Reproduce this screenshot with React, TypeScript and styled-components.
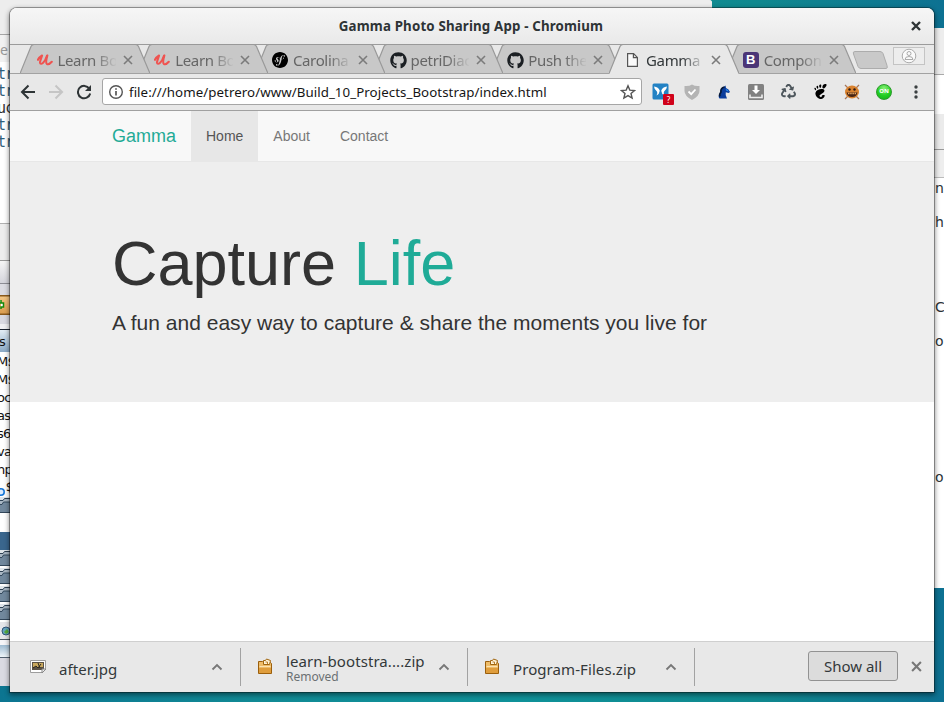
import React from 'react';
import styled, { createGlobalStyle } from 'styled-components';
import { FaGithub, FaRecycle } from 'react-icons/fa';
import { SiSymfony, SiGnome } from 'react-icons/si';

const Global = createGlobalStyle`
  * { box-sizing: border-box; }
  body { margin: 0; overflow: hidden; font-family: "Noto Sans", "Open Sans", sans-serif; }
`;

const Desktop = styled.div`
  position: relative;
  width: 944px;
  height: 702px;
  overflow: hidden;
  background:
    linear-gradient(90deg, #0c7591 0%, #118a95 27%, #0f9299 55%, #10898f 80%, #0d7192 100%);
`;

/* ---------- windows behind the browser ---------- */
const BackLeft = styled.div`
  position: absolute;
  left: 0;
  top: 0;
  width: 712px;
  height: 686px;
  overflow: hidden;
  border-top-right-radius: 3px;
  background: linear-gradient(#ededed, #ededed) 0 0 / 100% 10px no-repeat, #fff;
`;
const BackRight = styled.div`
  position: absolute;
  left: 700px;
  top: 28px;
  width: 244px;
  height: 560px;
  background: #fff;
`;
const Band = styled.div<{ $h: number; $bg: string }>`
  height: ${p => p.$h}px;
  background: ${p => p.$bg};
  overflow: hidden;
`;
const TabTitle = styled.div`
  padding-top: 6px;
  font: 14px/17px "Noto Sans", sans-serif;
  color: #999;
`;
const CodeLine = styled.div<{ $c?: string }>`
  height: 17px;
  margin-left: -3px;
  font: 15px/17px "DejaVu Sans Mono", monospace;
  letter-spacing: -0.8px;
  color: ${p => p.$c || '#315f7b'};
`;
const ListLine = styled.div`
  position: relative;
  height: 18px;
  margin-left: -3px;
  padding-top: 1px;
  font: 13px/18px "DejaVu Sans", sans-serif;
  letter-spacing: -0.8px;
  color: #111;
`;
const ListHead = styled(ListLine)`
  margin-left: -1px;
  padding-top: 3px;
`;
const SideText = styled.div<{ $h: number }>`
  height: ${p => p.$h}px;
  padding-left: 235px;
  font: 14px/20px "DejaVu Sans", sans-serif;
  color: #2c3438;
`;
const FolderRow = styled.div`
  height: 18px;
  svg { display: block; }
`;

const Folder = () => (
  <FolderRow>
    <svg width="12" height="18">
      <rect width="12" height="16" fill="#dfe5ea" />
      <path d="M-1 15.500V4.500l1-1h3l1.500-2h8v14z" fill="#a9b7c4" stroke="#2f4254" />
      <path d="M-1 15.500V7.500h3l1.500-2.500h9v10.500z" fill="#71889d" stroke="#33485c" />
    </svg>
  </FolderRow>
);

/* ---------- browser window ---------- */
const BrowserWindow = styled.div`
  position: absolute;
  left: 10px;
  top: 8px;
  width: 924px;
  height: 684px;
  display: flex;
  flex-direction: column;
  overflow: hidden;
  border-radius: 7px 7px 0 0;
  background: #fff;
`;
const WindowShadow = styled.div`
  position: absolute;
  left: 10px;
  top: 8px;
  width: 924px;
  height: 684px;
  border-radius: 7px 7px 0 0;
  box-shadow: 0 0 0 1px rgba(0, 0, 0, 0.32), 0 2px 5px 1px rgba(0, 0, 0, 0.45);
`;
const TitleBar = styled.div`
  flex: none;
  height: 36px;
  display: grid;
  grid-template-columns: 36px 1fr 36px;
  align-items: center;
  background: linear-gradient(#f6f6f6, #e9e9e9);
  svg { display: block; margin-left: 13px; }
`;
const Title = styled.div`
  grid-column: 2;
  text-align: center;
  font-size: 13.3px;
  letter-spacing: 0.16px;
  font-weight: 700;
  color: #2e3436;
  white-space: nowrap;
  padding-right: 2px;
`;
const TabStrip = styled.div`
  flex: none;
  height: 30px;
  display: flex;
  padding-left: 10px;
  background: linear-gradient(#9b9b9b, #9b9b9b) 0 0 / 100% 1px no-repeat,
    linear-gradient(#a2a2a2, #a2a2a2) 0 29px / 100% 1px no-repeat, #e8e8e8;
`;
const TabBox = styled.div<{ $z: number }>`
  position: relative;
  z-index: ${p => p.$z};
  flex: none;
  width: 130px;
  height: 30px;
  margin-right: -12.3px;
  display: flex;
  align-items: center;
  padding: 1px 0 0 16.500px;
`;
const TabShape = styled.svg`
  position: absolute;
  left: 0;
  top: 0;
  z-index: -1;
`;
const TabIcon = styled.div`
  width: 16px;
  height: 16px;
  margin-right: 5px;
  svg { display: block; }
`;
const TabLabel = styled.div<{ $active?: boolean }>`
  width: 58px;
  overflow: hidden;
  white-space: nowrap;
  font-size: 15px;
  line-height: 20px;
  letter-spacing: -0.35px;
  color: ${p => (p.$active ? '#33383a' : '#666')};
  mask-image: linear-gradient(90deg, #000 62%, transparent 102%);
`;
const TabClose = styled.div`
  margin: 1px 0 0 7px;
  svg { display: block; }
`;
const NewTab = styled.svg`
  flex: none;
  margin: 7px 0 0 8px;
`;
const Profile = styled.div`
  margin: 3px 9px 0 auto;
  width: 32px;
  height: 18px;
  display: flex;
  align-items: center;
  justify-content: center;
  border: 1px solid #c4c4c4;
  background: #ededed;
`;

const Toolbar = styled.div`
  flex: none;
  height: 37px;
  display: flex;
  align-items: center;
  padding: 0 0 1px 10px;
  background: #e8e8e8;
  border-bottom: 1px solid #a0a0a0;
`;
const NavIcon = styled.div`
  width: 28px;
  svg { display: block; }
`;
const Omnibox = styled.div`
  width: 540px;
  height: 27px;
  margin-left: -2px;
  display: flex;
  align-items: center;
  padding: 0 5px;
  border: 1px solid #a6a6a6;
  border-radius: 3px;
  background: #fff;
`;
const Url = styled.div`
  flex: 1;
  padding-left: 5px;
  font-size: 13.3px;
  letter-spacing: 0.06px;
  line-height: 18px;
  color: #151515;
  white-space: nowrap;
`;
const Extensions = styled.div`
  flex: 1;
  display: grid;
  grid-template-columns: repeat(9, 32px);
  justify-items: center;
  align-items: center;
  padding-left: 2px;
`;
const Ext = styled.div`
  position: relative;
  width: 18px;
  height: 18px;
  display: flex;
  align-items: center;
  justify-content: center;
  color: #4d565c;
`;
const Badge = styled.div`
  position: absolute;
  left: 12px;
  top: 11px;
  width: 11px;
  height: 11px;
  border-radius: 1px;
  background: #d0021b;
  color: #fff;
  font-size: 8px;
  line-height: 11px;
  text-align: center;
`;
const OnDot = styled.div`
  width: 16px;
  height: 16px;
  border: 1px solid #2c9a2c;
  border-radius: 50%;
  background: radial-gradient(circle at 50% 25%, #8df07a, #22cf22 55%, #0fae17);
  color: #fff;
  font-size: 6px;
  font-weight: 700;
  line-height: 13px;
  text-align: center;
`;
const BootB = styled.div`
  width: 16px;
  height: 16px;
  border-radius: 3px;
  background: #4b3577;
  color: #fff;
  font: 700 13px/16px "Liberation Sans", sans-serif;
  text-align: center;
`;

/* ---------- page ---------- */
const Page = styled.main`
  flex: 1;
  font-family: "Liberation Sans", Arial, sans-serif;
  background: #fff;
`;
const SiteNav = styled.nav`
  height: 51px;
  display: flex;
  padding-left: 102px;
  background: #f8f8f8;
  border-bottom: 1px solid #e7e7e7;
`;
const Brand = styled.div`
  width: 79px;
  font-size: 18px;
  line-height: 50px;
  color: #1fab97;
`;
const NavLink = styled.div<{ $active?: boolean }>`
  height: 50px;
  padding: 0 15px;
  font-size: 14px;
  line-height: 50px;
  color: ${p => (p.$active ? '#555' : '#777')};
  background: ${p => (p.$active ? '#e7e7e7' : 'transparent')};
`;
const Jumbotron = styled.section`
  height: 240px;
  padding: 67px 0 0 102px;
  background: #eee;
  color: #333;
`;
const Headline = styled.h1`
  margin: 0;
  font-size: 63px;
  line-height: 69px;
  font-weight: 400;
  span { color: #1fab97; }
`;
const Lead = styled.p`
  margin: 10px 0 0;
  font-size: 21px;
  line-height: 30px;
  letter-spacing: 0.015px;
`;

/* ---------- downloads ---------- */
const DownloadBar = styled.footer`
  flex: none;
  height: 51px;
  display: flex;
  align-items: center;
  border-top: 1px solid #cfcfcf;
  background: #e8e8e8;
`;
const Download = styled.div<{ $w: number }>`
  width: ${p => p.$w}px;
  height: 38px;
  display: flex;
  align-items: center;
  padding-right: 17px;
  border-right: 1px solid #a2a2a2;
`;
const FileIcon = styled.div<{ $left: number }>`
  margin: 0 13px 2px ${p => p.$left}px;
  svg { display: block; }
`;
const FileText = styled.div<{ $shift: number }>`
  flex: 1;
  padding-top: ${p => p.$shift}px;
  white-space: nowrap;
`;
const FileName = styled.div`
  font-size: 15px;
  letter-spacing: 0.08px;
  line-height: 18px;
  color: #33383a;
`;
const FileState = styled.div`
  font-size: 12px;
  line-height: 13px;
  color: #6b7073;
`;
const ShowAll = styled.button`
  width: 90px;
  height: 30px;
  margin: 0 0 2px auto;
  padding: 0;
  border: 1px solid #929292;
  border-radius: 3px;
  background: #dcdcdc;
  font: 15px/20px "Noto Sans", sans-serif;
  color: #33383a;
`;
const BarClose = styled.div`
  margin: 0 12px 2px 13px;
  svg { display: block; }
`;

const Cross = ({ size, color, width }: { size: number; color: string; width: number }) => (
  <svg width={size} height={size} viewBox="0 0 10 10">
    <path d="M1 1l8 8M9 1l-8 8" stroke={color} strokeWidth={width} />
  </svg>
);
const Udemy = () => (
  <svg width="16" height="16" viewBox="0 0 17 16" fill="none" stroke="#ef5350" strokeLinecap="round" strokeLinejoin="round">
    <path d="M1 7.800C2 5.800 3.600 4.300 5.400 3.200C4.600 6.200 3 9 3.200 10.900C3.800 13.800 8.200 11.200 10.600 3.500" strokeWidth="2.200" />
    <path d="M11 3.200C9.800 7.400 9 10.800 10.400 12.100C11.700 13 14.200 11.600 15.700 9.900" strokeWidth="2.200" />
  </svg>
);
const PageIcon = () => (
  <svg width="16" height="16" fill="#fafafa" stroke="#555" strokeWidth="1.2">
    <path d="M2.6 1.6h6l3.8 3.8v9H2.6zM8.4 1.6v4h4" />
  </svg>
);
const Archive = () => (
  <svg width="16" height="17">
    <path d="M1.500 3.500h4l1 1h7l1 1v10h-13z" fill="#eebc68" stroke="#9b5f0c" />
    <path d="M2.500 8.500h11" stroke="#fbe3b2" />
    <path d="M2 10h12v5H2z" fill="#df9d3c" />
    <path d="M6.500 6.500V2.500h2l1-1.500 4 1.500-1 4z" fill="#fff3d6" stroke="#a0650f" />
    <path d="M8.500 4h2v2" fill="none" stroke="#b8802f" />
  </svg>
);
const ImageFile = () => (
  <svg width="16" height="15">
    <path d="M.5 1.500h15v9l-3 3H.5z" fill="#fff" stroke="#9d9d9d" />
    <rect x="2" y="3" width="12" height="8" fill="#5b5245" />
    <rect x="3" y="4" width="10" height="4" fill="#c9a95f" />
    <path d="M3 9l3-2 2 2 3-4M8 4l2 5" stroke="#2c271f" fill="none" />
    <path d="M12 14v-4h4z" fill="#eee" stroke="#888" />
  </svg>
);
const Chevron = () => (
  <svg width="12" height="8" fill="none" stroke="#777" strokeWidth="1.8"><path d="M1.500 6.500L6 2l4.500 4.500" /></svg>
);

const GithubMark = () => <FaGithub size={17} color="#1b1f23" />;
const tabs = [
  { label: 'Learn Bo', icon: <Udemy /> },
  { label: 'Learn Bo', icon: <Udemy /> },
  { label: 'Carolina', icon: <SiSymfony size={16} color="#000" /> },
  { label: 'petriDiac', icon: <GithubMark /> },
  { label: 'Push the', icon: <GithubMark /> },
  { label: 'Gamma', icon: <PageIcon />, active: true },
  { label: 'Compon', icon: <BootB>B</BootB> },
];
const downloads = [
  { name: 'after.jpg', icon: <ImageFile />, w: 231, left: 20 },
  { name: 'learn-bootstra....zip', state: 'Removed', icon: <Archive />, w: 227, left: 16 },
  { name: 'Program-Files.zip', icon: <Archive />, w: 227, left: 16 },
];

const Backdrop = () => (
  <>
    <BackLeft>
      <Band $h={34} $bg="#ededed" />
      <Band $h={1} $bg="#a5a5a5" />
      <Band $h={27} $bg="#f1f1f1"><TabTitle>e</TabTitle></Band>
      <Band $h={161} $bg="#fff">
        <Band $h={4} $bg="#fff" />
        <CodeLine>tr</CodeLine>
        <CodeLine>tr</CodeLine>
        <CodeLine $c="#333">uc</CodeLine>
        <CodeLine>tr</CodeLine>
        <CodeLine>tr</CodeLine>
      </Band>
      <Band $h={1} $bg="#b0b0b0" />
      <Band $h={36} $bg="#ededed" />
      <Band $h={1} $bg="#999" />
      <Band $h={22} $bg="linear-gradient(#f6f6f6, #d5d5dc)" />
      <Band $h={1} $bg="#8d8d95" />
      <Band $h={11} $bg="#dcdce3" />
      <Band $h={20} $bg="linear-gradient(#8b5a1c 0 1px, #f3c583 2px, #dc9e51 18px, #8b5a1c 19px)">
        <svg width="10" height="12"><path d="M-3 3H1V0M1 9V7H3.500V3H1" fill="#fff" stroke="#138a0c" strokeWidth="1.500" /></svg>
      </Band>
      <Band $h={9} $bg="#d9d9e1" />
      <Band $h={5} $bg="#f0f0f3" />
      <Band $h={1} $bg="#1c2430" />
      <Band $h={22} $bg="linear-gradient(#e3edf5, #8aa9c6)"><ListHead>s</ListHead></Band>
      <ListLine>M$</ListLine>
      <ListLine>M$</ListLine>
      <ListLine>oc</ListLine>
      <ListLine>as</ListLine>
      <ListLine>s6</ListLine>
      <ListLine>va</ListLine>
      <ListLine>hp</ListLine>
      <Band $h={19} $bg="#fff">
        <svg width="12" height="18"><circle cx="1" cy="14" r="3.200" fill="#dcecff" stroke="#1878d8" strokeWidth="1.600" /><text x="6" y="14" fontSize="12" fill="#111">$</text></svg>
      </Band>
      <Folder />
      <Band $h={17} $bg="#fff" />
      <Band $h={18} $bg="#3a668d" />
      <Folder />
      <Folder />
      <Folder />
      <Folder />
      <Band $h={17} $bg="#e6e6ea">
        <svg width="12" height="17"><circle cx="6" cy="9" r="4" fill="#66a4c0" stroke="#315578" /><path d="M4 10l3-3 2 3-3 2z" fill="#56aa3c" /></svg>
      </Band>
      <Band $h={1} $bg="#4d5966" />
      <Band $h={5} $bg="#f5f5f8" />
      <Band $h={12} $bg="linear-gradient(#9dbbd2, #f0f6fa)" />
      <Band $h={1} $bg="#536272" />
      <Band $h={30} $bg="#dadae2" />
    </BackLeft>
    <BackRight>
      <Band $h={46} $bg="#ededed" />
      <Band $h={1} $bg="#a9a9a9" />
      <Band $h={39} $bg="#fff" />
      <Band $h={35} $bg="#ebebeb" />
      <Band $h={1} $bg="#999" />
      <Band $h={27} $bg="#eee" />
      <Band $h={1} $bg="#bbb" />
      <SideText $h={34}>n</SideText>
      <SideText $h={85}>h</SideText>
      <SideText $h={34}>C</SideText>
      <SideText $h={136}>o</SideText>
      <SideText $h={34}>o</SideText>
    </BackRight>
  </>
);

export default function App() {
  return (
    <Desktop>
      <Global />
      <Backdrop />
      <WindowShadow />
      <BrowserWindow>
        <TitleBar>
          <Title>Gamma Photo Sharing App - Chromium</Title>
          <Cross size={10} color="#2e3436" width={2.4} />
        </TitleBar>
        <TabStrip>
          {tabs.map((t, i) => (
            <TabBox key={i} $z={t.active ? 20 : 10 - i}>
              <TabShape width="130" height="30">
                <path d="M0 30L11 2.500Q12 .5 14 .5H115.500Q117.500 .5 118.500 2.500L130 30z" fill={t.active ? '#e8e8e8' : '#c8c8c8'} />
                <path d="M0 29.500L11 2.500Q12 .5 14 .5H115.500Q117.500 .5 118.500 2.500L130 29.500" fill="none" stroke="#999" strokeWidth="1.2" />
                {!t.active && <path d="M0 29.500H130" stroke="#a2a2a2" />}
              </TabShape>
              <TabIcon>{t.icon}</TabIcon>
              <TabLabel $active={t.active}>{t.label}</TabLabel>
              <TabClose><Cross size={10} color="#7b7b7b" width={1.6} /></TabClose>
            </TabBox>
          ))}
          <NewTab width="37" height="18">
            <path d="M3 .5H28Q30 .5 31 2.500L35 14.500Q36 17.500 34 17.500H9Q7 17.500 6 15.500L1.500 3Q.5 .5 3 .5z" fill="#c9c9c9" stroke="#acacac" />
          </NewTab>
          <Profile>
            <svg width="16" height="16" fill="none" stroke="#aaa"><circle cx="8" cy="8" r="6.800" fill="#fafafa" /><circle cx="8" cy="5.500" r="2" /><path d="M4 11.500q0-3 4-3t4 3z" /></svg>
          </Profile>
        </TabStrip>
        <Toolbar>
          <NavIcon><svg width="16" height="16" fill="none" stroke="#2e3436" strokeWidth="2"><path d="M15 8H2.500M8.500 1.500L2 8l6.500 6.500" /></svg></NavIcon>
          <NavIcon><svg width="16" height="16" fill="none" stroke="#c5c5c5" strokeWidth="2"><path d="M1 8h12.500M7.500 1.500L14 8l-6.500 6.500" /></svg></NavIcon>
          <NavIcon><svg width="16" height="16" fill="none" stroke="#2e3436" strokeWidth="2"><path d="M13.300 4.600A6.200 6.200 0 1 0 14.200 9.500" /><path d="M15 1v6H9z" fill="#2e3436" stroke="none" /></svg></NavIcon>
          <Omnibox>
            <svg width="16" height="16" fill="none" stroke="#555" strokeWidth="1.400"><circle cx="8" cy="8" r="6.300" /><path d="M8 7v4.500M8 4.200v1.600" strokeWidth="1.700" /></svg>
            <Url>file:///home/petrero/www/Build_10_Projects_Bootstrap/index.html</Url>
            <svg width="16" height="16" fill="none" stroke="#555" strokeWidth="1.400"><path d="M8 1.800l1.800 4.300 4.700.4-3.500 3 1.100 4.600L8 11.600l-4.100 2.500L5 9.500l-3.500-3 4.700-.4z" /></svg>
          </Omnibox>
          <Extensions>
            <Ext>
              <svg width="17" height="17"><rect x=".5" y=".5" width="16" height="16" rx="1.500" fill="#2382c4" /><path d="M2 3.500Q6.500 4 7.800 7.800Q7.500 11 4.500 12.500Q6 9.500 4.500 8Q2.500 7 2 3.500z" fill="#fff" /><path d="M15 3.500Q10.500 4 9.200 7.800Q9.500 11 12.500 12.500Q11 9.500 12.500 8Q14.500 7 15 3.500z" fill="#fff" /></svg>
              <Badge>?</Badge>
            </Ext>
            <Ext><svg width="16" height="16"><path d="M8 .5q3 2 7.500 1.500v5q0 5-7.500 9-7.500-4-7.500-9V2q4.500 .5 7.500-1.500z" fill="#b4b4b4" /><path d="M4.500 7.500l2.700 2.700L11.500 5.500" stroke="#fff" strokeWidth="1.800" fill="none" /></svg></Ext>
            <Ext><svg width="16" height="16"><path d="M3.500 14.500Q1.500 12 4 9.500Q3.500 5 7 3.500L9.500 1.500L10 4Q13 5 14 8L12.500 9L9.800 8.300Q9 10.500 11 14.500z" fill="#0a3c9c" /><path d="M8.500 3Q4.500 4 5 8Q3 10.500 4 12.500" stroke="#061a3a" strokeWidth="1.700" fill="none" /><path d="M9.500 4.800Q12 5.500 13 7.600L10.500 7z" fill="#2589ec" /></svg></Ext>
            <Ext><svg width="16" height="16"><rect width="16" height="16" rx="1.500" fill="#818181" /><path d="M6.500 1.500h3V6H12L8 10 4 6h2.500z" fill="#fff" /><path d="M2 10.500v3h12v-3" stroke="#eee" strokeWidth="1.600" fill="none" /></svg></Ext>
            <Ext><FaRecycle size={15} /></Ext>
            <Ext><SiGnome size={15} color="#000" /></Ext>
            <Ext><svg width="16" height="16"><path d="M1 1l3 3M15 1l-3 3M1 15l3-3M15 15l-3-3" stroke="#a5765a" strokeWidth="1.200" /><ellipse cx="8" cy="8" rx="7" ry="6.500" fill="#d9822f" /><path d="M2.500 8.500h11q-1 4.500-5.500 4.500t-5.500-4.500z" fill="#472515" /><path d="M4 9.500h8" stroke="#e9a963" strokeWidth="1.300" strokeDasharray="1.500 .7" /><circle cx="5.500" cy="5.500" r="1.200" fill="#2f1a10" /><circle cx="10.500" cy="5.500" r="1.200" fill="#2f1a10" /></svg></Ext>
            <Ext><OnDot>ON</OnDot></Ext>
            <Ext><svg width="4" height="14" fill="#3b4042"><circle cx="2" cy="2" r="1.700" /><circle cx="2" cy="7" r="1.700" /><circle cx="2" cy="12" r="1.700" /></svg></Ext>
          </Extensions>
        </Toolbar>
        <Page>
          <SiteNav>
            <Brand>Gamma</Brand>
            <NavLink $active>Home</NavLink>
            <NavLink>About</NavLink>
            <NavLink>Contact</NavLink>
          </SiteNav>
          <Jumbotron>
            <Headline>Capture <span>Life</span></Headline>
            <Lead>A fun and easy way to capture &amp; share the moments you live for</Lead>
          </Jumbotron>
        </Page>
        <DownloadBar>
          {downloads.map(d => (
            <Download key={d.name} $w={d.w}>
              <FileIcon $left={d.left}>{d.icon}</FileIcon>
              <FileText $shift={d.state ? 1 : 4}>
                <FileName>{d.name}</FileName>
                {d.state && <FileState>{d.state}</FileState>}
              </FileText>
              <Chevron />
            </Download>
          ))}
          <ShowAll>Show all</ShowAll>
          <BarClose><Cross size={11} color="#777" width={1.9} /></BarClose>
        </DownloadBar>
      </BrowserWindow>
    </Desktop>
  );
}
